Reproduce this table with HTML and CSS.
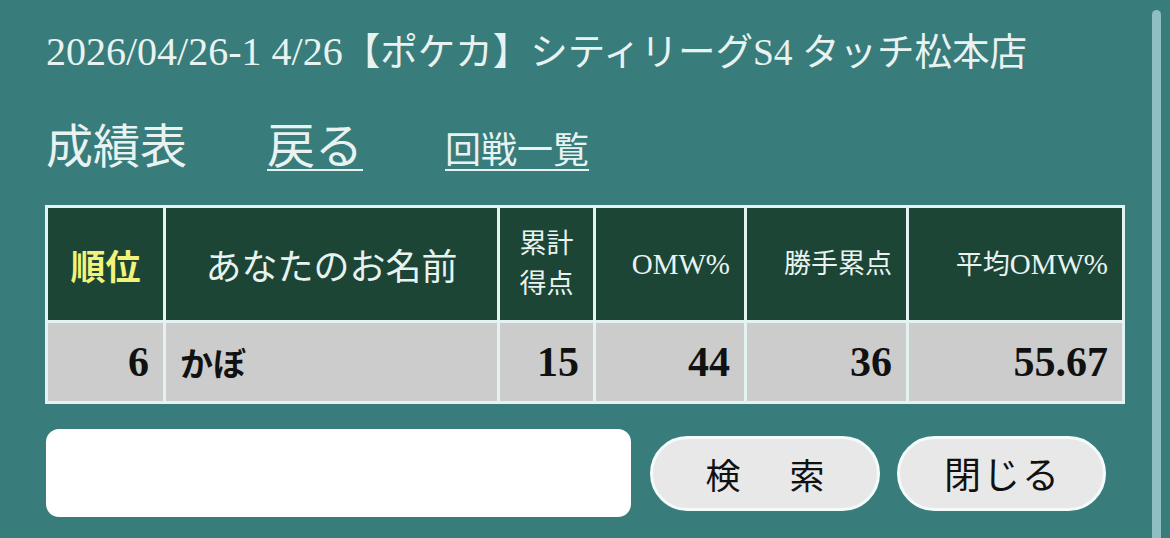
FILE: index.html
```html
<!DOCTYPE html>
<html lang="ja">
<head>
<meta charset="utf-8">
<title>成績表</title>
<link rel="stylesheet" href="styles.css">
</head>
<body>
<div class="page">
  <h1 class="title"><span class="title-date">2026/04/26-1 4/26</span>【ポケカ】シティリーグS4 タッチ松本店</h1>
  <div class="nav">
    <span class="nav-main">成績表</span>
    <a class="nav-back" href="#">戻る</a>
    <a class="nav-rounds" href="#">回戦一覧</a>
  </div>
  <table class="score">
    <colgroup>
      <col class="c1"><col class="c2"><col class="c3"><col class="c4"><col class="c5"><col class="c6">
    </colgroup>
    <thead>
      <tr>
        <th class="rank-h">順位</th>
        <th class="name-h">あなたのお名前</th>
        <th class="small-h center">累計<br>得点</th>
        <th class="small-h"><span class="latin">OMW%</span></th>
        <th class="small-h">勝手累点</th>
        <th class="small-h">平均<span class="latin">OMW%</span></th>
      </tr>
    </thead>
    <tbody>
      <tr>
        <td class="num">6</td>
        <td class="name">かぼ</td>
        <td class="num">15</td>
        <td class="num">44</td>
        <td class="num">36</td>
        <td class="num">55.67</td>
      </tr>
    </tbody>
  </table>
  <div class="search">
    <input class="search-input" type="text">
    <button class="btn btn-search">検　索</button>
    <button class="btn btn-close">閉じる</button>
  </div>
</div>
<div class="scrollbar"></div>
</body>
</html>
```
FILE: styles.css
```css
html, body {
  margin: 0;
  padding: 0;
  background: #387c7b;
  height: 100%;
  overflow: hidden;
}
.page {
  padding: 27px 0 0 46px;
  width: 1080px;
  font-family: "Liberation Serif", "Noto Sans CJK JP", serif;
  color: #e8f3f1;
}
.title {
  margin: 0;
  font-size: 37.5px;
  font-weight: normal;
  line-height: 50px;
  white-space: nowrap;
}
.title-date {
  font-size: 40px;
}
.nav {
  display: flex;
  align-items: baseline;
  margin-top: 41px;
  height: 56px;
  line-height: 56px;
}
.nav-main {
  font-size: 47px;
}
.nav-back {
  font-size: 48px;
  margin-left: 80px;
  color: #e8f3f1;
  text-decoration: underline;
  text-decoration-thickness: 2px;
  text-underline-offset: 6px;
}
.nav-rounds {
  font-size: 36px;
  margin-left: 82px;
  color: #e8f3f1;
  text-decoration: underline;
  text-decoration-thickness: 2px;
  text-underline-offset: 6px;
}
.score {
  margin-top: 30px;
  margin-left: -1px;
  border-collapse: separate;
  border-spacing: 3px;
  background: #e4f2f2;
  table-layout: fixed;
  width: 1080px;
}
.c1 { width: 115px; }
.c2 { width: 331px; }
.c3 { width: 93px; }
.c4 { width: 148px; }
.c5 { width: 159px; }
.c6 { width: 213px; }
.score th {
  background: #1c4535;
  color: #e8f3f1;
  height: 112px;
  padding: 0 14px 0 0;
  font-weight: normal;
  text-align: right;
  white-space: nowrap;
}
.score th.rank-h {
  color: #f3f27a;
  font-weight: bold;
  font-size: 35px;
  text-align: center;
  padding: 0;
}
.score th.name-h {
  font-size: 36px;
  text-align: center;
  padding: 0;
}
.score th.small-h {
  font-size: 27px;
  line-height: 40px;
}
.score th .latin {
  font-size: 29px;
}
.score th.center {
  text-align: center;
  padding: 0;
}
.score td {
  background: #cccccc;
  color: #111;
  height: 78px;
  font-weight: bold;
  font-size: 42px;
  padding: 0 14px 0 0;
}
.score td.num {
  text-align: right;
}
.score td.name {
  font-size: 33px;
  padding-left: 14px;
  text-align: left;
}
.search {
  display: flex;
  align-items: center;
  margin-top: 25px;
}
.search-input {
  width: 585px;
  height: 88px;
  box-sizing: border-box;
  border: none;
  border-radius: 13px;
  background: #ffffff;
  margin: 0;
}
.btn {
  height: 75px;
  box-sizing: border-box;
  border: 3px solid #f4fbfb;
  border-radius: 38px;
  background: #e8e8e8;
  color: #111;
  font-family: "Noto Sans CJK JP", sans-serif;
  font-size: 35px;
  padding: 0;
}
.btn-search {
  width: 230px;
  margin-left: 19px;
  letter-spacing: 7px;
  text-indent: 7px;
}
.btn-close {
  width: 209px;
  margin-left: 17px;
  font-size: 37px;
  letter-spacing: 2px;
  text-indent: 2px;
}
.scrollbar {
  position: fixed;
  top: 10px;
  bottom: 0;
  left: 1152px;
  width: 9px;
  border-radius: 5px 5px 0 0;
  background: #8fbfc2;
}
```
